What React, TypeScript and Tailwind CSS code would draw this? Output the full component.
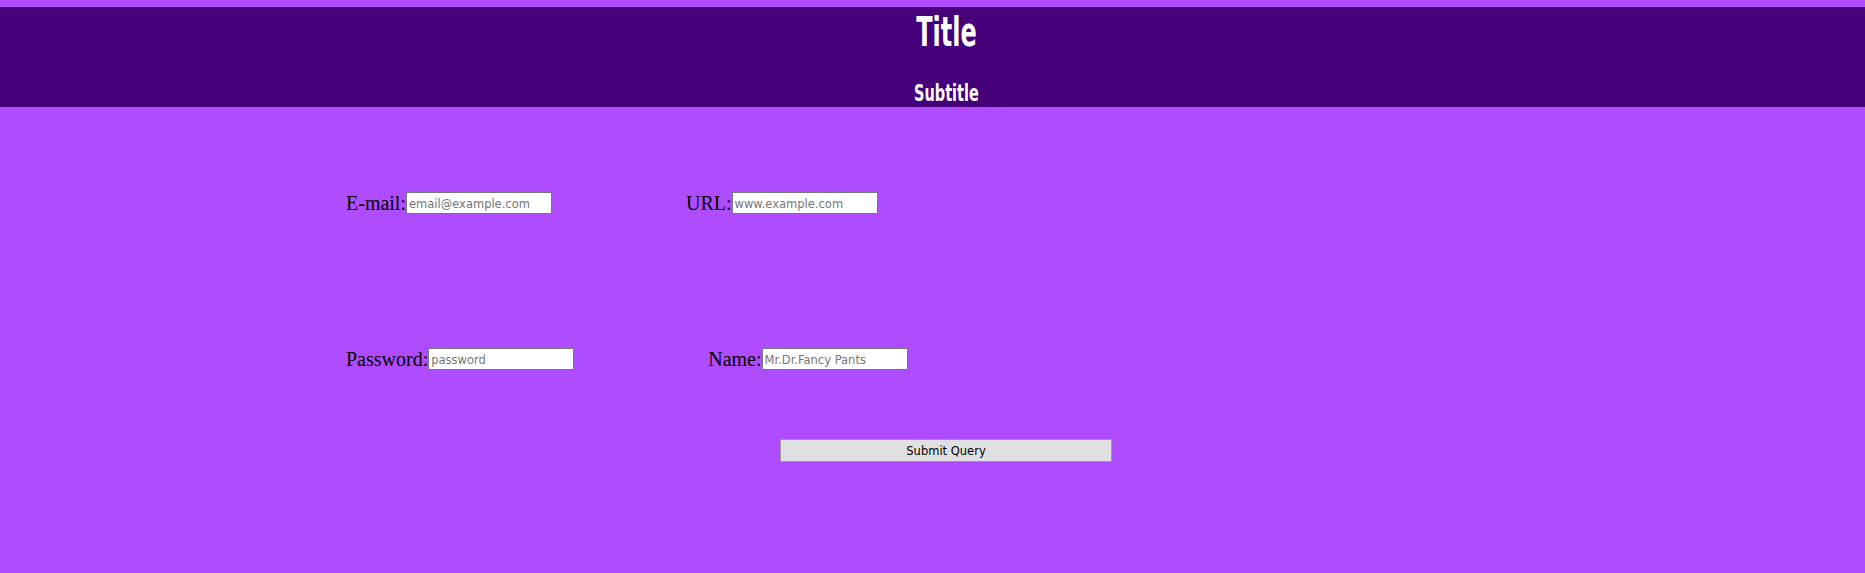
import React from "react";

function Field({ label, placeholder, type, className }: { label: string; placeholder: string; type: string; className?: string }) {
  return (
    <div className={"flex items-end " + (className ?? "")}>
      <label className="font-['Liberation_Serif',serif] text-[20px] leading-[22px] text-black">{label}</label>
      <input
        type={type}
        placeholder={placeholder}
        className="w-[146px] h-[22px] bg-white border border-[#767676] px-[2px] pt-[1px] font-['DejaVu_Sans',sans-serif] text-[11.5px] text-black placeholder:text-[#757575] outline-none"
      />
    </div>
  );
}

export default function App() {
  return (
    <div className="w-full min-h-[573px] bg-[#b04cff] pt-[7px]">
      <header className="h-[100px] bg-[#46007a] flex flex-col items-center pl-[27px] text-white font-['DejaVu_Sans',sans-serif] font-bold">
        <h1 className="text-[40px] leading-[46px] mt-[2px] inline-block scale-x-[0.6]">Title</h1>
        <h2 className="text-[23px] leading-[28px] mt-[24px] inline-block scale-x-[0.63]">Subtitle</h2>
      </header>
      <form className="pl-[346px]">
        <div className="flex pt-[85px]">
          <Field label="E-mail:" placeholder="email@example.com" type="email" />
          <Field label="URL:" placeholder="www.example.com" type="url" className="ml-[134px]" />
        </div>
        <div className="flex pt-[134px]">
          <Field label="Password:" placeholder="password" type="password" />
          <Field label="Name:" placeholder="Mr.Dr.Fancy Pants" type="text" className="ml-[134px]" />
        </div>
        <div className="flex pt-[69px] pl-[434px]">
          <button type="submit" className="w-[332px] h-[23px] pt-[2px] bg-[#e0e0e0] border border-[#9a9a9a] font-['DejaVu_Sans',sans-serif] text-[11.5px] text-black">
            Submit Query
          </button>
        </div>
      </form>
    </div>
  );
}
